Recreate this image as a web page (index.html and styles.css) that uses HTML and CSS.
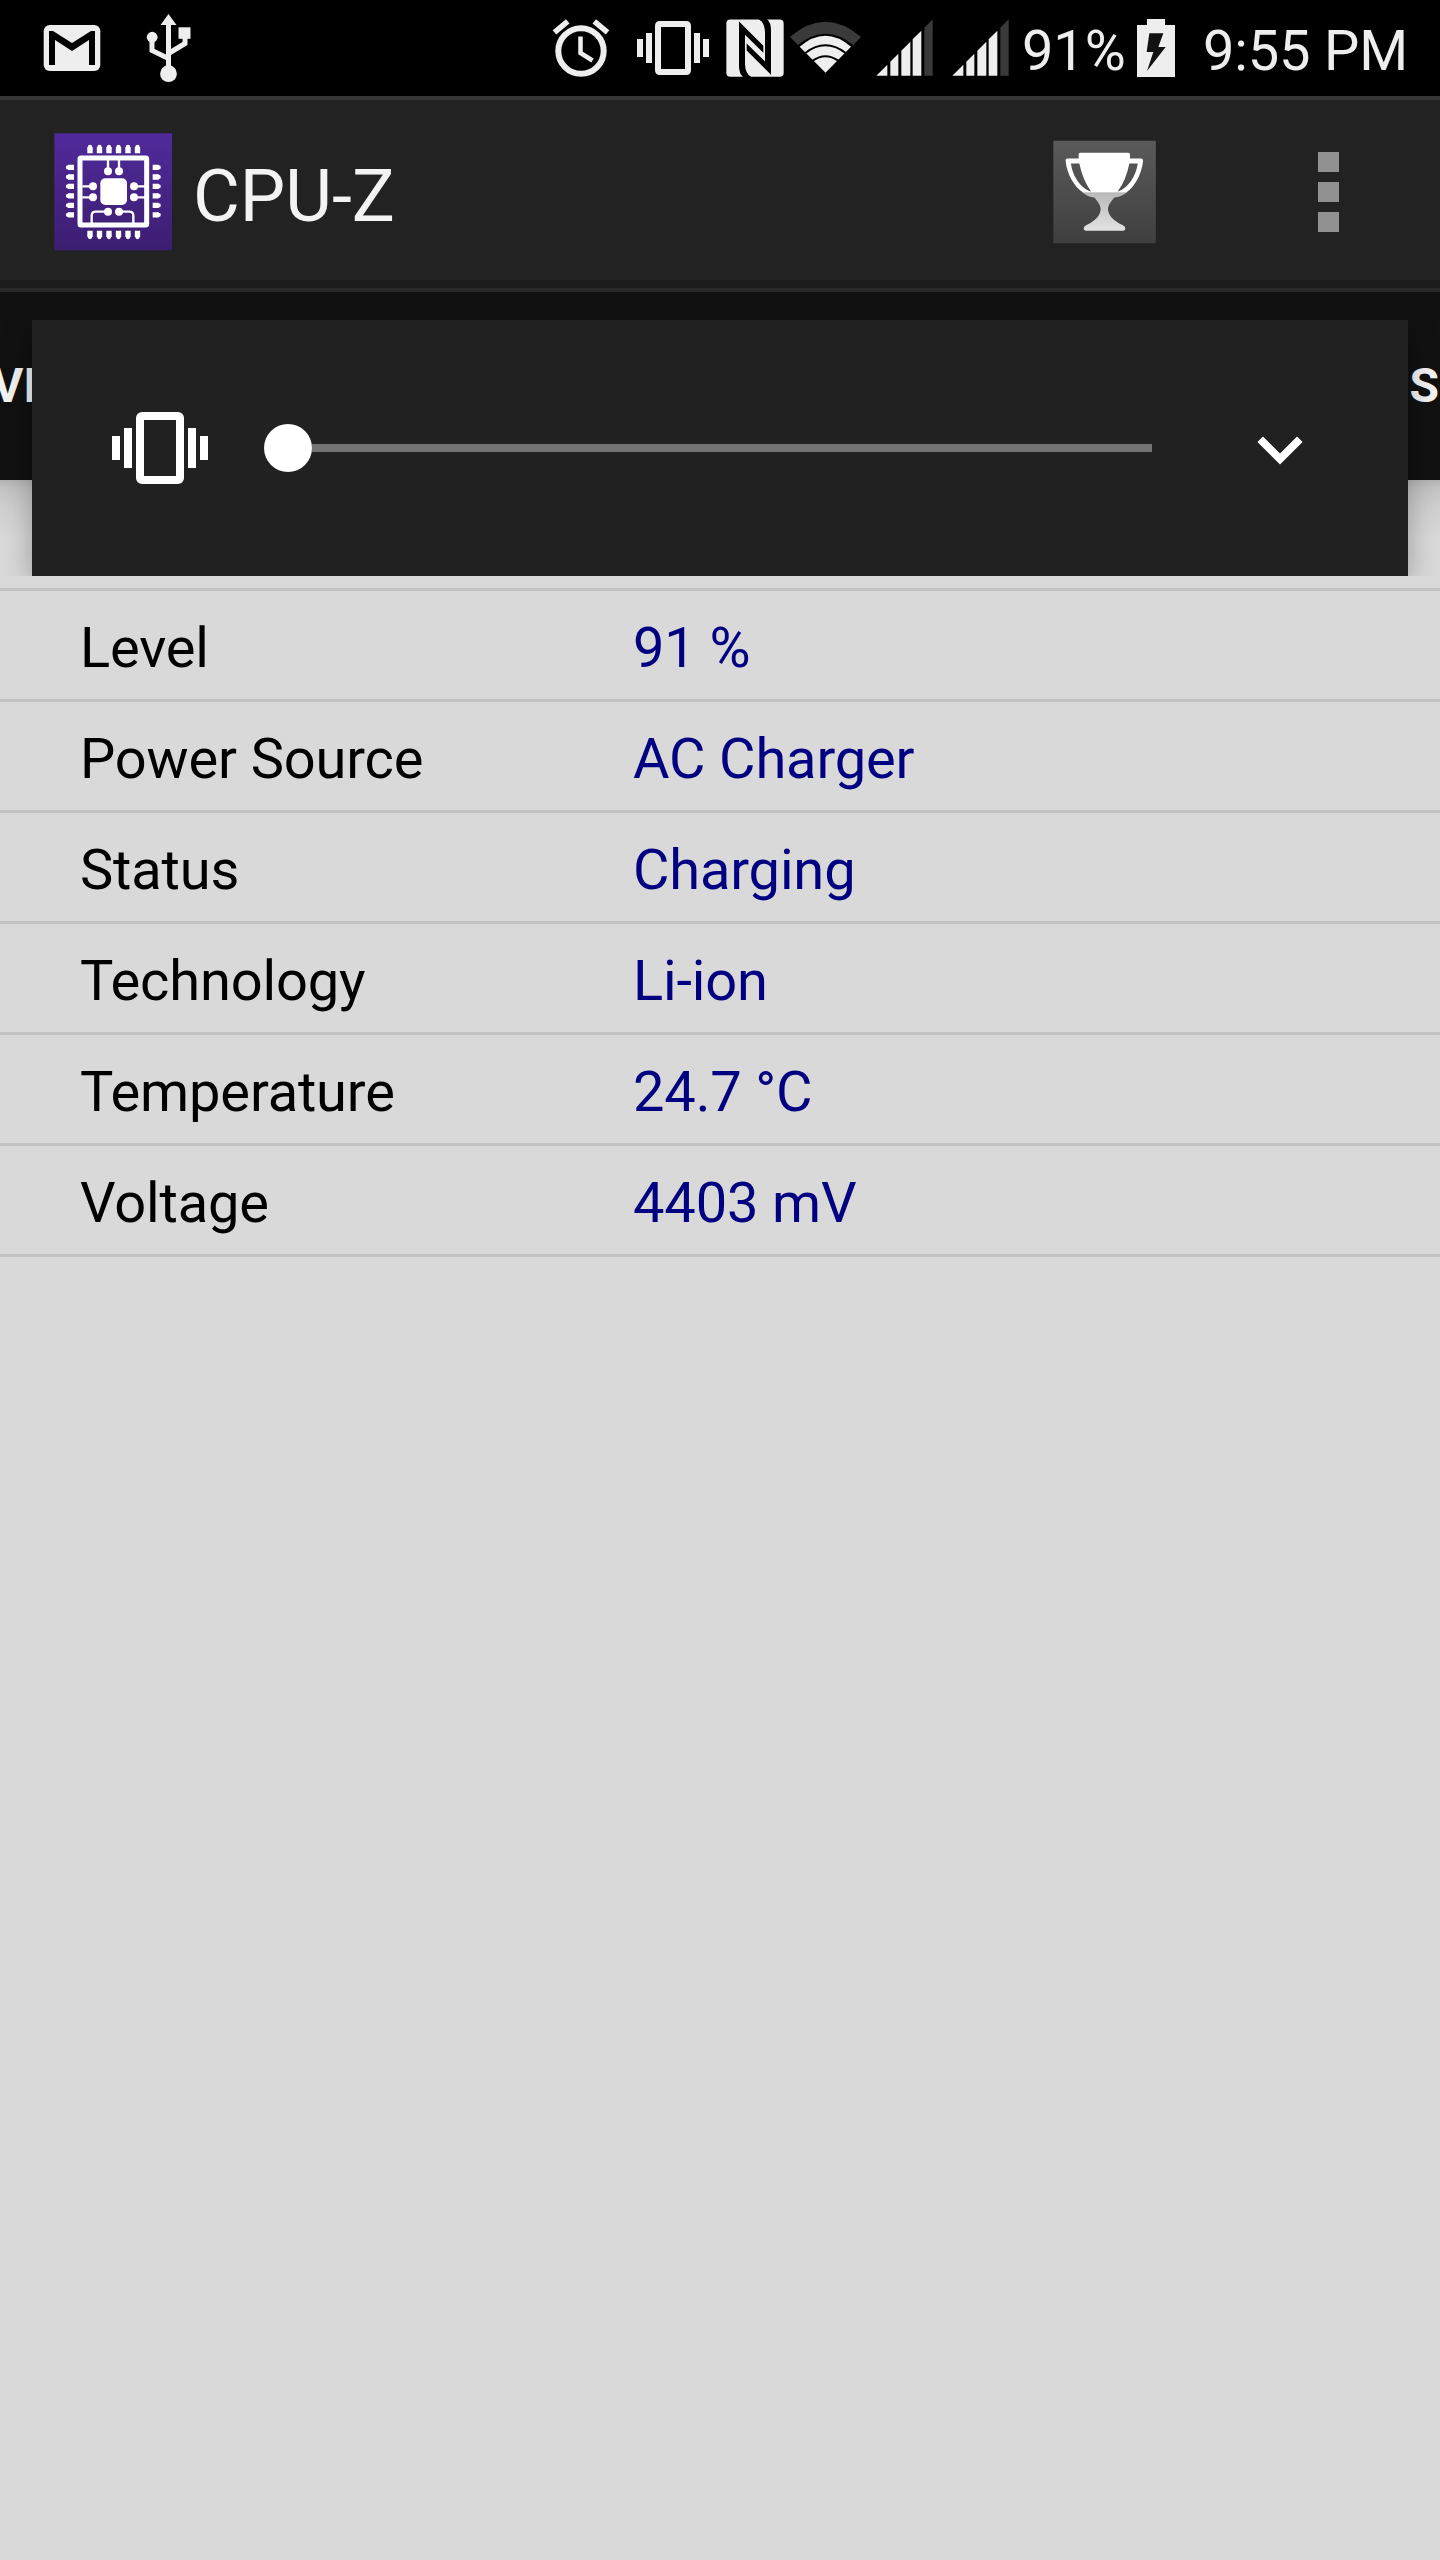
FILE: index.html
```html
<!DOCTYPE html>
<html lang="en">
<head>
<meta charset="utf-8">
<title>CPU-Z</title>
<link rel="stylesheet" href="styles.css">
</head>
<body>
<div class="screen">
  <div class="status-bar">
    <div class="notifications">
      <svg class="ic-mail" width="58" height="48" viewBox="43 24 58 48">
        <rect x="43.7" y="25" width="56.6" height="46" rx="6" fill="#eee"/>
        <path d="M49 31H53L72 43 91 31H95V65H89V40L72 51 55 40V65H49Z" fill="#000"/>
      </svg>
      <svg class="ic-usb" width="46" height="70" viewBox="146 13 46 70">
        <g fill="#eee">
          <path d="M168.500 14L176.500 25H171V68H166V25H160.500Z"/>
          <circle cx="168.500" cy="73.700" r="8.400"/>
          <circle cx="152.200" cy="37.200" r="5.400"/>
          <rect x="178.500" y="27.300" width="12" height="11.500"/>
        </g>
        <path d="M152 40V50.500L168.500 58.500M185 37V43.500L168.500 53.500" fill="none" stroke="#eee" stroke-width="5"/>
      </svg>
    </div>
    <div class="indicators">
      <svg class="ic-alarm" width="58" height="60" viewBox="552 18 58 60">
        <g fill="none" stroke="#eee">
          <circle cx="581" cy="51" r="22.700" stroke-width="6"/>
          <path d="M580.500 36.500V53L592.500 60.500" stroke-width="4.500"/>
        </g>
        <path d="M552.700 30.200L566 19.200 569.500 23.500 556.200 34.500ZM609.300 30.200L596 19.200 592.500 23.500 605.800 34.500Z" fill="#eee"/>
      </svg>
      <svg class="ic-vibe" width="72" height="54" viewBox="637 21 72 54">
        <g fill="#eee">
          <rect x="637" y="39" width="6" height="18"/>
          <rect x="646" y="33" width="6" height="30"/>
          <rect x="694" y="33" width="6" height="30"/>
          <rect x="703" y="39" width="6" height="18"/>
          <path fill-rule="evenodd" d="M659.500 21H686.500A4.500 4.500 0 0 1 691 25.500V70.500A4.500 4.500 0 0 1 686.500 75H659.500A4.500 4.500 0 0 1 655 70.500V25.500A4.500 4.500 0 0 1 659.500 21ZM661 27V69H685V27Z"/>
        </g>
      </svg>
      <svg class="ic-nfc" width="58" height="58" viewBox="18 14.500 174 174">
        <rect x="19" y="16" width="172" height="172" rx="12" fill="#eee"/>
        <path d="M57 22L130 95V116L75 62V150Q76 180 95 189H70Q57 180 57 155ZM153 182L80 109V88L135 142V54Q134 24 115 14H140Q153 24 153 49Z" fill="#000"/>
      </svg>
      <svg class="ic-wifi" width="72" height="52" viewBox="30 64 216 156">
        <path d="M30 112Q136 21 243 112L220 136Q136 68 54 136Z" fill="#3a3a3a"/>
        <path d="M136.500 219L59 141Q136 75 213 141Z" fill="#eee"/>
        <path d="M76 160Q136 114 197 160M98 183Q136 156 175 183" fill="none" stroke="#000" stroke-width="6"/>
      </svg>
      <svg class="ic-signal" width="57" height="57" viewBox="287 58 171 171">
        <path d="M288 228L321 195V228ZM330 186L354 162V228H330ZM363 153L390 126V228H363ZM397 119L423 93V228H397Z" fill="#eee"/>
        <path d="M432 84L457 59V228H432Z" fill="#3a3a3a"/>
      </svg>
      <svg class="ic-signal second" width="57" height="57" viewBox="287 58 171 171">
        <path d="M288 228L321 195V228ZM330 186L354 162V228H330ZM363 153L390 126V228H363ZM397 119L423 93V228H397Z" fill="#eee"/>
        <path d="M432 84L457 59V228H432Z" fill="#3a3a3a"/>
      </svg>
      <span class="percent">91%</span>
      <svg class="ic-battery" width="38" height="58" viewBox="411 57 114 174">
        <path d="M411 75H441V57H495V75H525V231H411Z" fill="#eee"/>
        <path d="M448 100H490L475 141H497L441 213L460 156H440Z" fill="#111"/>
      </svg>
      <span class="clock">9:55 PM</span>
    </div>
  </div>

  <header class="app-bar">
    <svg class="app-icon" width="118" height="118" viewBox="11 9 354 354">
      <defs>
        <linearGradient id="purple" x1="0" y1="0" x2="0" y2="1">
          <stop offset="0" stop-color="#502a9b"/><stop offset="1" stop-color="#3c1e70"/>
        </linearGradient>
      </defs>
      <rect x="12" y="10" width="353" height="351" fill="url(#purple)"/>
      <g fill="none" stroke="#fff">
        <rect x="89" y="84" width="200" height="201" rx="3" stroke-width="15"/>
        <path stroke-width="7" d="M173 90V124M206 90V124M96 169H128M96 202H128M251 169H284M251 202H284M173 245H136Q124 245 124 257V280M206 245H237Q249 245 249 257V280"/>
        <path stroke-width="16" d="M119 51V70M147.500 51V70M176 51V70M204.500 51V70M233 51V70M261.500 51V70M119 302V321M147.500 302V321M176 302V321M204.500 302V321M233 302V321M261.500 302V321M53 112H71M53 141H71M53 169H71M53 197.500H71M53 226H71M53 254.500H71M307 112H325M307 141H325M307 169H325M307 197.500H325M307 226H325M307 254.500H325"/>
        <path stroke-width="13" stroke-linecap="round" d="M119 51V60M147.500 51V60M176 51V60M204.500 51V60M233 51V60M261.500 51V60M119 312V321M147.500 312V321M176 312V321M204.500 312V321M233 312V321M261.500 312V321M53 112H60M53 141H60M53 169H60M53 197.500H60M53 226H60M53 254.500H60M317 112H325M317 141H325M317 169H325M317 197.500H325M317 226H325M317 254.500H325"/>
      </g>
      <g fill="#fff">
        <rect x="150" y="145" width="80" height="80" rx="15"/>
        <circle cx="173" cy="124" r="12"/><circle cx="206" cy="124" r="12"/>
        <circle cx="128" cy="169" r="12"/><circle cx="128" cy="202" r="12"/>
        <circle cx="251" cy="169" r="12"/><circle cx="251" cy="202" r="12"/>
        <circle cx="173" cy="245" r="12"/><circle cx="206" cy="245" r="12"/>
      </g>
    </svg>
    <h1 class="title">CPU-Z</h1>
    <svg class="trophy" width="104" height="104" viewBox="69 58.500 312 312">
      <defs>
        <linearGradient id="plate" x1="0" y1="0" x2="0" y2="1">
          <stop offset="0" stop-color="#5a5a5a"/><stop offset="1" stop-color="#3f3f3f"/>
        </linearGradient>
        <linearGradient id="stem" x1="0" y1="0" x2="0" y2="1">
          <stop offset="0" stop-color="#b8b8b8"/><stop offset="1" stop-color="#e2e2e2"/>
        </linearGradient>
      </defs>
      <rect x="70" y="61" width="307.500" height="307.500" rx="3" fill="url(#plate)"/>
      <path d="M157 215H291Q274 229 253 231C239 247 234 257 234 267C236 292 262 306 280 315Q286 318 286 324T280 331H167Q161 330 161 324T167 315C185 306 210 292 212 267C212 257 207 247 193 231Q173 229 157 215Z" fill="url(#stem)"/>
      <path fill-rule="evenodd" d="M151 97H295Q300 97 300 102V114H333Q340 114 339 122C335 160 315 198 289 216H159C132 198 111 160 107 122Q106 114 113 114H146V102Q146 97 151 97ZM123 129C126 160 148 202 183 213Q158 178 148 129ZM323 129C320 160 298 202 263 213Q289 178 298 129Z" fill="#fff"/>
    </svg>
    <div class="overflow-menu"><i></i><i></i><i></i></div>
  </header>

  <nav class="tabs">
    <span class="tab tab-left">VI</span>
    <span class="tab">S</span>
  </nav>

  <main class="list">
    <div class="row spacer"></div>
    <div class="row"><span class="label">Level</span><span class="value">91 %</span></div>
    <div class="row"><span class="label">Power Source</span><span class="value">AC Charger</span></div>
    <div class="row"><span class="label">Status</span><span class="value">Charging</span></div>
    <div class="row"><span class="label">Technology</span><span class="value">Li-ion</span></div>
    <div class="row"><span class="label">Temperature</span><span class="value">24.7 °C</span></div>
    <div class="row"><span class="label">Voltage</span><span class="value">4403 mV</span></div>
  </main>

  <div class="volume-panel">
    <svg width="96" height="72" viewBox="0 0 96 72">
      <g fill="#fff">
        <rect x="0" y="24" width="8" height="24"/>
        <rect x="12" y="16" width="8" height="40"/>
        <rect x="76" y="16" width="8" height="40"/>
        <rect x="88" y="24" width="8" height="24"/>
        <path fill-rule="evenodd" d="M30 0H66A6 6 0 0 1 72 6V66A6 6 0 0 1 66 72H30A6 6 0 0 1 24 66V6A6 6 0 0 1 30 0ZM32 8V64H64V8Z"/>
      </g>
    </svg>
    <div class="slider"><div class="thumb"></div><div class="track"></div></div>
    <svg class="chevron" width="46" height="30" viewBox="0 0 46 30">
      <path d="M3.200 3.200L23 23 42.800 3.200" fill="none" stroke="#fff" stroke-width="7.800"/>
    </svg>
  </div>
</div>
</body>
</html>
```
FILE: styles.css
```css
* { box-sizing: border-box; }

body {
  margin: 0;
  font-family: Roboto, "Liberation Sans", sans-serif;
}

svg { display: block; flex: none; }

.screen {
  position: relative;
  width: 1440px;
  height: 2560px;
  overflow: hidden;
  background: #d9d9d9;
}

.status-bar {
  display: flex;
  justify-content: space-between;
  height: 96px;
  background: #000;
  color: #eee;
  font-size: 56px;
  line-height: 66px;
  letter-spacing: -0.150px;
  white-space: nowrap;
}

.notifications, .indicators { display: flex; align-items: flex-start; }
.notifications { padding-left: 43px; }
.indicators { width: 888px; }

.ic-mail { margin-top: 24px; }
.ic-usb { margin: 13px 0 0 45px; }
.ic-alarm { margin-top: 18px; }
.ic-vibe { margin: 21px 0 0 27px; }
.ic-nfc { margin: 19px 0 0 17px; }
.ic-wifi { margin: 21px 0 0 6px; }
.ic-signal { margin: 19px 0 0 14px; }
.ic-signal.second { margin-left: 19px; }
.percent { width: 115px; margin: 18px 0 0 13px; }
.ic-battery { margin: 19px 0 0; }
.clock { margin: 18px 0 0 28px; }

.app-bar {
  display: flex;
  align-items: flex-start;
  height: 196px;
  padding-left: 54px;
  background: linear-gradient(#363636 0 4px, #222 4px 184px, #1b1b1b 184px 192px, #292929 192px);
}

.app-icon { margin-top: 37px; }

.title {
  width: 400px;
  margin: 59px 460px 0 21px;
  color: #f3f3f3;
  font-size: 72px;
  font-weight: 400;
  line-height: 84px;
}

.trophy { margin-top: 44px; }

.overflow-menu {
  display: flex;
  flex-direction: column;
  gap: 9.500px;
  margin: 55.500px 0 0 161px;
}

.overflow-menu i {
  width: 20.500px;
  height: 20.500px;
  background: #919191;
}

.tabs {
  display: flex;
  justify-content: space-between;
  height: 188px;
  padding: 66px 1px 0 0;
  background: #111;
  color: #f3f3f3;
  font-size: 48px;
  font-weight: 700;
  line-height: 56px;
}

.tab-left { margin-left: -8px; }

.list {
  background: linear-gradient(#b4b4b4 0, #c3c3c3 8px, #d0d0d0 28px, #d9d9d9 56px);
}

.row {
  display: flex;
  height: 111px;
  padding: 3px 0 0 80px;
  border-bottom: 3px solid #c3c3c3;
  color: #000;
  font-size: 56px;
  line-height: 108px;
  letter-spacing: -0.150px;
}

.label { width: 553px; }
.value { color: #000080; }

/* Floats over the tabs and the first list row */
.volume-panel {
  position: absolute;
  top: 320px;
  left: 32px;
  display: flex;
  align-items: center;
  width: 1376px;
  height: 256px;
  padding-left: 80px;
  background: #212121;
  box-shadow: 0 6px 28px rgba(0, 0, 0, 0.3);
  clip-path: inset(0 -32px);
}

.slider {
  display: flex;
  align-items: center;
  width: 888px;
  margin-left: 56px;
}

.thumb {
  width: 48px;
  height: 48px;
  border-radius: 50%;
  background: #fff;
}

.track {
  flex: 1;
  height: 8px;
  background: #737373;
}

.chevron { margin: 6px 0 0 105px; }
```
